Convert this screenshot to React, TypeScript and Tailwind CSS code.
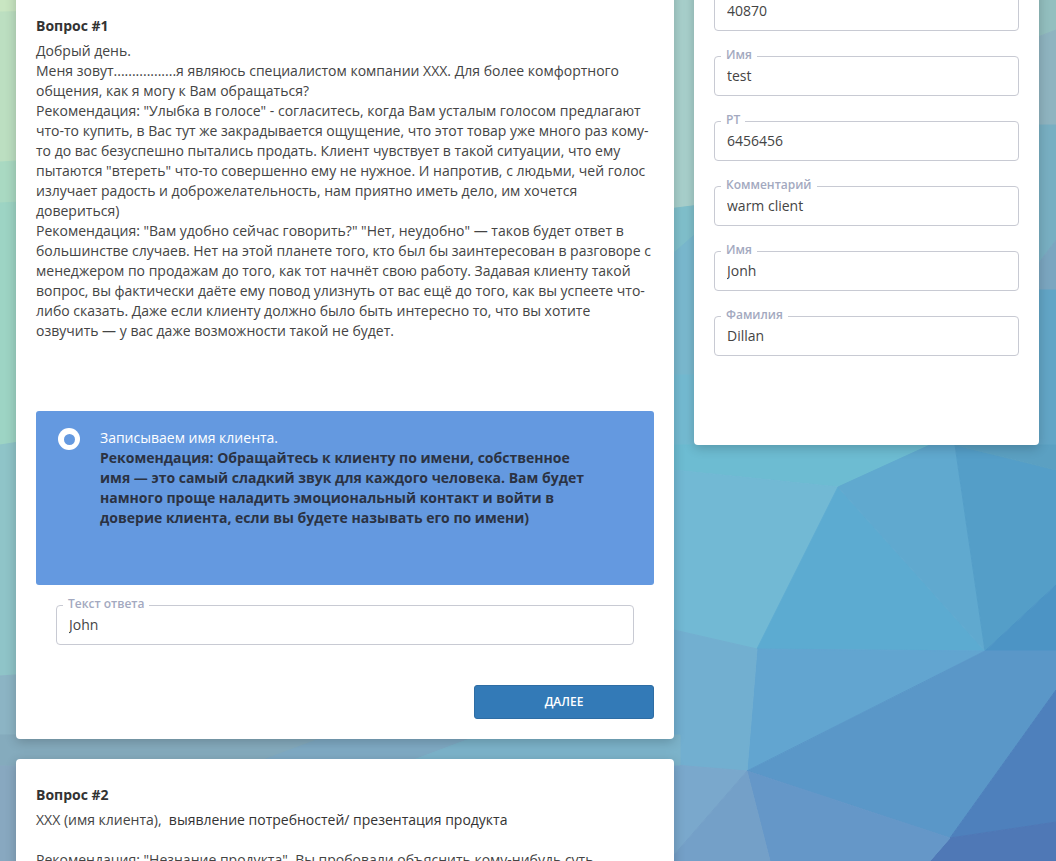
import React from 'react';

const polygons: [string, string][] = [
    // left side, top to bottom
    ['0,0 700,0 700,12 0,30', '#c9e6c2'],
    ['0,12 700,0 700,120 0,162', '#bcdfc1'],
    ['0,162 700,120 700,210 0,203', '#a9d9c2'],
    ['0,203 700,170 700,445 0,445', '#9dd4c4'],
    ['0,445 674,340 760,445 674,470 674,630 0,676', '#8fc4c8'],
    ['0,676 674,630 674,765 0,747', '#8cb4c4'],
    ['0,747 674,765 674,861 0,861', '#88a8c0'],
    // gap between the columns
    ['660,0 700,0 700,205 660,210', '#a8d0cc'],
    ['660,210 700,205 700,230 660,265', '#80c0cc'],
    ['660,265 700,230 700,375 660,375', '#7ab9cf'],
    ['660,375 700,375 700,445 660,445', '#74bbd2'],
    // right strip
    ['1030,0 1056,0 1056,30 1030,40', '#93bfbf'],
    ['1030,40 1056,30 1056,125 1030,125', '#8fb4c0'],
    ['1030,125 1056,125 1056,240 1030,275', '#78afc2'],
    ['1030,275 1056,240 1056,290 1030,290', '#7ba6c0'],
    ['1030,290 1056,290 1056,445 1030,445', '#62a5c6'],
    // lower right
    ['674,445 955,445 838,487 674,470', '#6dbcd2'],
    ['674,470 838,487 757,649 674,630', '#72b9d4'],
    ['838,487 985,651 757,649', '#5cabd1'],
    ['838,487 930,445 955,445 985,651', '#60a9cf'],
    ['955,445 1056,470 1056,585 985,651', '#549ec8'],
    ['955,445 1056,445 1056,470', '#5ba0c2'],
    ['985,651 1056,585 1056,651', '#4c94c5'],
    ['757,649 985,651 747,771', '#62a5d0'],
    ['674,630 757,649 747,771 674,765', '#72afd0'],
    ['985,651 1056,651 1056,690 950,838 747,771', '#5a97c8'],
    ['1056,690 1056,822 950,838', '#4e80bc'],
    ['950,838 1056,822 1056,861 930,861', '#4f78b6'],
    ['747,771 950,838 930,861 770,861', '#6597c8'],
    ['674,765 747,771 674,855', '#7aa8cc'],
    ['747,771 770,861 674,861 674,855', '#74a0c8'],
    // strip between question cards
    ['0,735 330,735 250,765 0,765', '#85abbd'],
    ['330,735 480,735 400,765 250,765', '#7faac4'],
    ['480,735 680,735 680,765 400,765', '#7cb3ca'],
];

const Field: React.FC<{ label?: string; value: string; className?: string }> = ({ label, value, className }) => (
    <div className={`relative ${className ?? ''}`}>
        {label && (
            <span className="absolute left-[7px] -top-[9px] bg-white px-[5px] text-xs leading-4 font-semibold text-[#a3a9c0]">
                {label}
            </span>
        )}
        <input
            readOnly
            value={value}
            className="block w-full h-10 px-3 pb-[2px] border border-[#c8cad3] rounded bg-white text-sm text-[#444] outline-none"
        />
    </div>
);

export default function App() {
    return (
        <div className="relative h-[861px] overflow-hidden font-['Open_Sans',sans-serif] text-sm leading-5 text-[#444]">
            <svg className="absolute inset-0" width="1056" height="861" viewBox="0 0 1056 861">
                {polygons.map(([points, fill]) => (
                    <polygon key={points} points={points} fill={fill} stroke={fill} strokeWidth="1" />
                ))}
            </svg>

            <div className="relative flex items-start gap-5 pl-4 -mt-5">
                <div className="flex flex-col gap-5 w-[658px]">
                    {/* Question 1 */}
                    <div className="bg-white rounded shadow-[0_3px_12px_rgba(0,0,0,0.2)] px-5 pt-9 pb-5">
                        <div className="font-bold text-[#333]">Вопрос #1</div>
                        <div className="mt-[5px] mb-[70px]">
                            Добрый день.<br />
                            Меня зовут.................я являюсь специалистом компании ХХХ. Для более комфортного общения, как я могу к Вам обращаться?<br />
                            Рекомендация: "Улыбка в голосе" - согласитесь, когда Вам усталым голосом предлагают что-то купить, в Вас тут же закрадывается ощущение, что этот товар уже много раз кому-то до вас безуспешно пытались продать. Клиент чувствует в такой ситуации, что ему пытаются "втереть" что-то совершенно ему не нужное. И напротив, с людьми, чей голос излучает радость и доброжелательность, нам приятно иметь дело, им хочется довериться)<br />
                            Рекомендация: "Вам удобно сейчас говорить?" "Нет, неудобно" — таков будет ответ в большинстве случаев. Нет на этой планете того, кто был бы заинтересован в разговоре с менеджером по продажам до того, как тот начнёт свою работу. Задавая клиенту такой вопрос, вы фактически даёте ему повод улизнуть от вас ещё до того, как вы успеете что-либо сказать. Даже если клиенту должно было быть интересно то, что вы хотите озвучить — у вас даже возможности такой не будет.
                        </div>

                        <div className="flex h-[174px] bg-[#6499e0] rounded-[3px] pt-[17px] pl-[22px]">
                            <div className="flex items-center justify-center w-[22px] h-[22px] rounded-full bg-white shrink-0">
                                <div className="w-[11px] h-[11px] rounded-full bg-[#6499e0]" />
                            </div>
                            <div className="ml-[20px] w-[490px] text-white">
                                Записываем имя клиента.
                                <div className="font-bold text-[#2b3242]">
                                    Рекомендация: Обращайтесь к клиенту по имени, собственное имя — это самый сладкий звук для каждого человека. Вам будет намного проще наладить эмоциональный контакт и войти в доверие клиента, если вы будете называть его по имени)
                                </div>
                            </div>
                        </div>

                        <Field label="Текст ответа" value="John" className="mx-5 mt-5" />

                        <div className="flex justify-end mt-10">
                            <button className="w-[180px] h-[34px] rounded-[3px] bg-[#337ab7] border border-[#2e6da4] text-xs font-semibold uppercase text-white">
                                Далее
                            </button>
                        </div>
                    </div>

                    {/* Question 2 */}
                    <div className="bg-white rounded shadow-[0_3px_12px_rgba(0,0,0,0.2)] px-5 pt-[26px] pb-5">
                        <div className="font-bold text-[#333]">Вопрос #2</div>
                        <div className="mt-[5px]">
                            ХХХ (имя клиента),&nbsp; <span className="text-[#333]">выявление потребностей/ презентация продукта</span><br />
                            <br />
                            Рекомендация: "Незнание продукта". Вы пробовали объяснить кому-нибудь суть
                        </div>
                    </div>
                </div>

                {/* Client fields */}
                <div className="flex flex-col gap-[25px] w-[345px] h-[465px] bg-white rounded shadow-[0_3px_12px_rgba(0,0,0,0.2)] px-5 pt-[11px]">
                    <Field value="40870" />
                    <Field label="Имя" value="test" />
                    <Field label="РТ" value="6456456" />
                    <Field label="Комментарий" value="warm client" />
                    <Field label="Имя" value="Jonh" />
                    <Field label="Фамилия" value="Dillan" />
                </div>
            </div>
        </div>
    );
}
